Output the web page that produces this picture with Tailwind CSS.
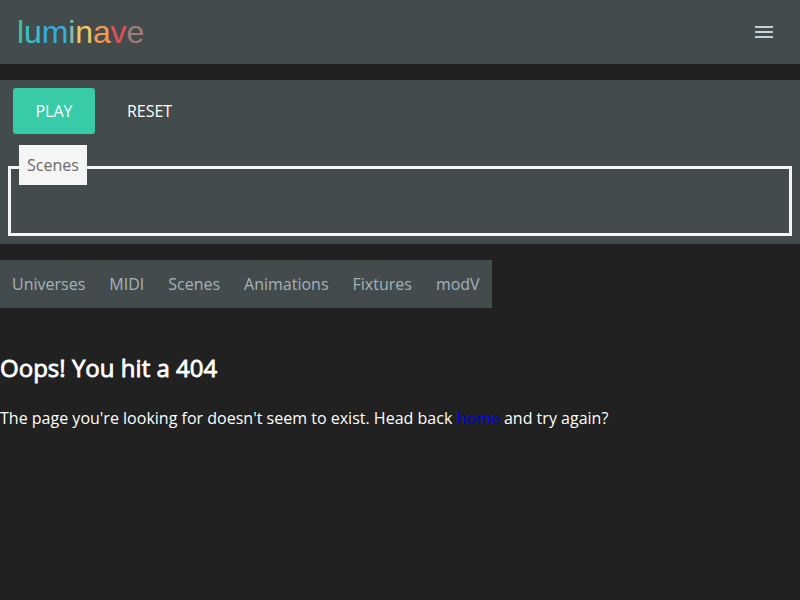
<!DOCTYPE html>
<html lang="en"><head><meta charset="utf-8"><title>luminave</title>
<script src="https://cdn.jsdelivr.net/npm/@tailwindcss/browser@4"></script></head>
<body class="bg-[#212121] text-white font-['Open_Sans',sans-serif] text-base h-screen overflow-hidden">
<header class="h-16 bg-[#434b4c] flex items-center justify-between pl-[17px] pr-6">
<div class="font-['Liberation_Sans',sans-serif] text-[32px] leading-none tracking-[-0.12px]"><span class="text-[#45bf9c]">l</span><span class="text-[#35c4c4]">u</span><span class="text-[#38abe0]">m</span><span class="text-[#8abcae]">i</span><span class="text-[#eccb62]">n</span><span class="text-[#f49850]">a</span><span class="text-[#e25252]">v</span><span class="text-[#a07b76]">e</span></div>
<svg class="w-6 h-6" viewBox="0 0 24 24" fill="#c3d0d6"><path d="M3 18h18v-2H3v2zm0-5h18v-2H3v2zm0-7v2h18V6H3z"/></svg>
</header>
<section class="mt-4 h-[164px] bg-[#434b4c] px-2 pt-2">
<div class="flex h-[46px] pl-[5px]"><button class="w-[82px] rounded-[3px] bg-[#37cca7]">PLAY</button><button class="ml-[10px] w-[89px]">RESET</button></div>
<div class="relative mt-8 h-[70px] border-[3px] border-[#f5f5f5]"><div class="absolute left-2 -top-6 h-10 px-2 bg-[#f5f5f5] text-[#6b6b6b] leading-10">Scenes</div></div>
</section>
<nav class="mt-4 h-12 w-[492px] bg-[#434b4c] text-[#a3b3bb] flex items-center gap-6 px-3"><a>Universes</a><a>MIDI</a><a>Scenes</a><a>Animations</a><a>Fixtures</a><a>modV</a></nav>
<main><h2 class="mt-11 text-2xl leading-8 font-normal tracking-[0.02px] [-webkit-text-stroke:0.8px_white]">Oops! You hit a 404</h2>
<p class="mt-[22px] leading-6 tracking-[0.01px]">The page you're looking for doesn't seem to exist. Head back <a class="text-[#0000ee] underline">home</a> and try again?</p></main>
</body></html>
